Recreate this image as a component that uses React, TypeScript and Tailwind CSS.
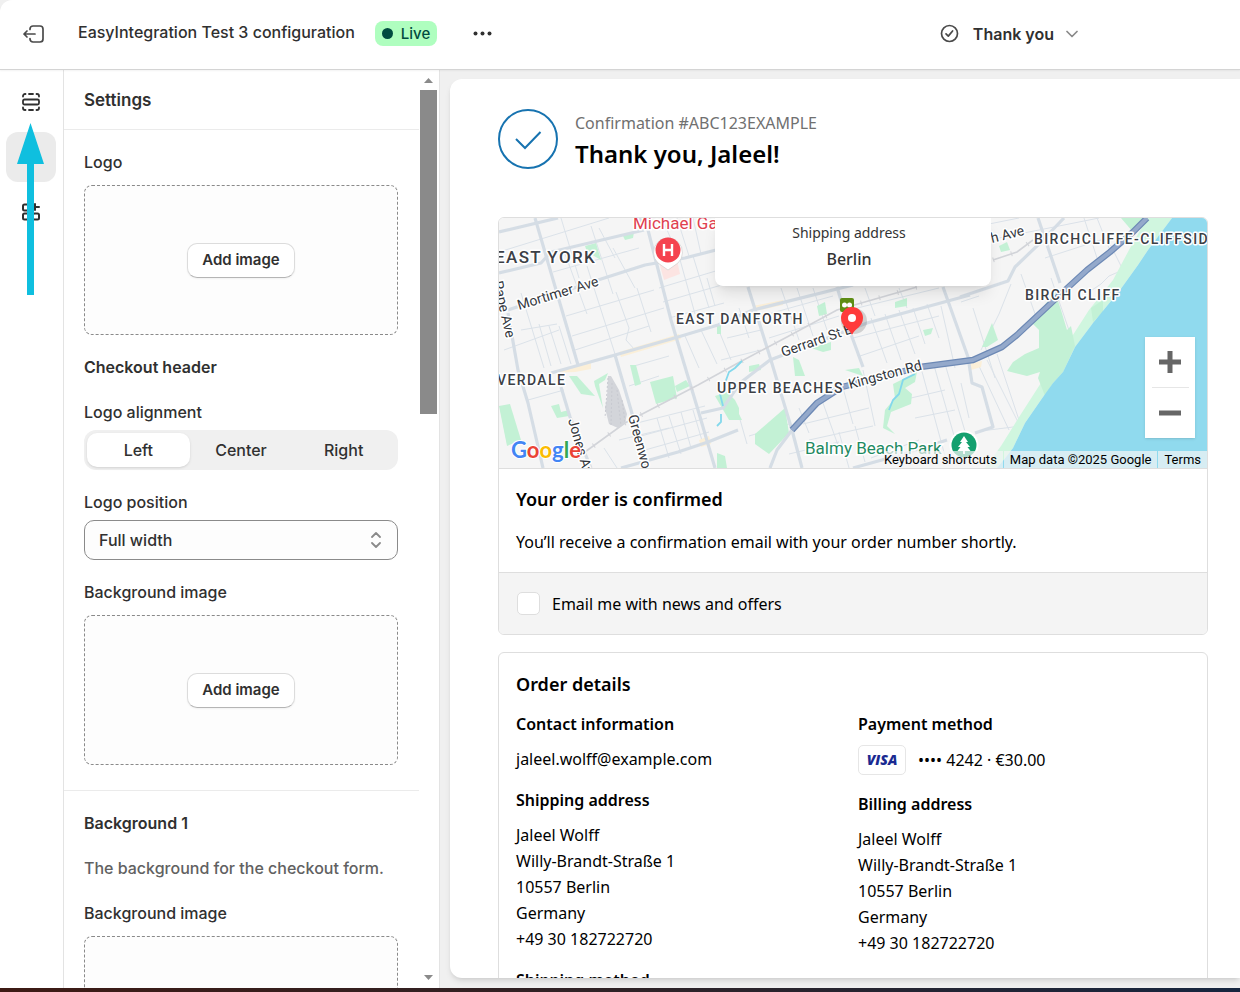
import { useState } from "react";

const INK = "#d5dde5";

// Main streets on the delivery map
const streets = [
  "M36 0 79 147",
  "M140 0 149 12 172 102 199 192 216 250",
  "M52 155 116 137 179 119 219 107 254 92 354 67",
  "M0 55 42 45 52 34 145 12",
  "M0 14 59 0",
  "M9 92 99 62 146 47 186 40 217 32",
  "M9 95 19 152 29 185 44 250",
  "M62 169 71 199 92 250",
  "M116 137 132 192 148 250",
  "M249 69 271 139 293 212 303 250",
  "M338 69 353 119 364 149",
  "M444 69 469 139 473 165 483 169 494 209 476 215",
  "M202 195 224 190 241 165 271 142 368 105 471 77",
  "M293 212 278 232 271 250",
  "M122 250 179 234 209 224 239 212",
  "M539 0 561 65",
  "M461 79 509 63 516 49 541 25 565 0",
  "M354 250 408 235 448 222",
];

const lanes = [
  "M0 34 110 0M54 54 140 30M67 98 155 72M73 118 165 90M76 132 150 108M5 132 60 112M22 112 58 106M29 182 65 172",
  "M62 0 80 60M92 8 114 76M22 75 45 150M40 106 52 148M50 108 62 146M60 108 72 146M64 30 88 96M88 48 116 136",
  "M117 74 130 110 127 122 136 132M138 70 152 114M114 30 136 70M100 10 116 40M163 0 180 40M178 0 190 38M194 0 202 36",
  "M160 70 220 52M164 84 240 62M170 100 225 85M180 38 196 96M194 38 210 90M208 60 216 88M186 118 200 150M202 112 218 146M218 108 232 142",
  "M135 148 170 138M130 168 160 158M138 205 206 188M142 218 208 200M146 232 210 214M158 200 170 240M170 198 182 236M182 194 192 230M194 192 204 226M105 230 118 250M120 222 170 210",
  "M240 90 250 120M228 120 262 112M262 98 334 78M270 120 340 98M282 70 300 122M298 70 314 118M314 70 328 112M350 92 440 70M354 120 440 98M361 138 420 118",
  "M372 100 388 145M386 96 402 142M400 92 416 136M414 90 426 126M428 86 440 120M442 88 456 150M400 70 408 90M366 70 376 98",
  "M422 150 446 238M434 144 458 228M446 146 468 220M412 180 446 172M416 200 456 192M344 170 354 206M364 152 376 208M324 185 340 230M304 206 370 190M310 222 374 208",
  "M340 214 350 250M356 208 366 244M300 190 310 215M372 240 420 222M290 236 340 224M250 218 290 206M236 184 248 226M222 142 262 132",
  "M462 84 480 78M474 90 496 160M488 142 520 206M498 136 522 208M480 148 510 212M462 165 470 200M482 213 522 208M482 132 500 96 512 66",
  "M522 56 548 130M546 40 608 20M572 118 580 118 588 108 606 98M552 60 572 118M585 0 598 40M598 0 610 30M608 20 624 52 610 58 602 66 590 74M470 10 520 0M500 20 600 0",
];

const parks = [
  "M86 28 97 25 102 42 88 34Z",
  "M124 18 135 14 134 20 126 22Z",
  "M70 158 78 158 96 178 82 176Z",
  "M95 163 109 155 106 162 100 166 104 190 96 168Z",
  "M131 147 137 147 142 166 136 168Z",
  "M151 164 174 158 178 180 157 186Z",
  "M176 168 187 162 191 168 178 174Z",
  "M0 188 11 186 22 222 8 228Z",
  "M52 188 60 186 62 194 70 192 70 198 58 200Z",
  "M216 178 228 174 236 182 240 190 240 202 230 202Z",
  "M218 235 226 238 228 250 218 250Z",
  "M256 216 286 190 290 215 270 236 256 226Z",
  "M227 185 237 190 243 202 234 202Z",
  "M294 139 300 142 306 158 296 158Z",
  "M250 148 260 146 262 152 250 154Z",
  "M318 88 326 84 328 96 320 98Z",
  "M396 84 408 80 408 88 396 90Z",
  "M424 112 434 110 432 116 426 118Z",
  "M312 130 332 124 332 132 324 134Z",
  "M346 152 360 150 364 158Z",
  "M394 166 418 154 416 164 406 170 413 176 412 186 402 190 392 194 388 208 396 216 384 210 386 192 396 180Z",
  "M500 28 508 24 511 32 502 34Z",
  "M483 129 493 105 499 122 488 129Z",
  "M556 74 562 92 568 112 572 108 576 128 564 154 554 165 546 178 539 160 541 154 528 158 508 153 514 144 526 136 540 130 540 112 532 104Z",
  "M592 90 604 82 604 94 594 104Z",
  "M622 0 648 0 634 14Z",
  "M218 106 222 106 222 116 218 116Z",
];

function DeliveryMap() {
  return (
    <svg
      viewBox="0 0 708 250"
      preserveAspectRatio="xMidYMid slice"
      className="block h-full w-full font-[Roboto,sans-serif]"
      role="img"
      aria-label="Map of the shipping address"
    >
      <rect width="708" height="250" fill="#f5f5f5" />
      <g fill="none" stroke="#dbe2e9" strokeWidth="1">
        {lanes.map((d) => (
          <path key={d} d={d} />
        ))}
      </g>
      <path d="M673 0 649 32 639 47 621 72 594 105 576 129 564 154 554 165 544 179 526 205 514 230 507 239 498 250 486 250 502 228 522 196 540 168 572 120 590 92 614 62 630 32 648 0Z" fill="#d0f6df" />
      <g fill="#c3f1d5">
        {parks.map((d) => (
          <path key={d} d={d} />
        ))}
      </g>
      <path d="M160 44 178 42 181 56 165 62Z" fill="#fce4e2" />
      <path d="M52 155 92 144 92 151 76 154ZM120 134 180 116 182 121 122 139ZM200 222 210 218 212 226 202 229ZM254 88 284 82 284 87 262 92ZM470 146 483 143 482 149 472 152Z" fill="#fbefd8" />
      <g fill="none" stroke={INK} strokeWidth="3.2" strokeLinejoin="round">
        {streets.map((d) => (
          <path key={d} d={d} />
        ))}
      </g>
      {/* Railway and its yard */}
      <path d="M79 239 126 205 199 167 239 145 288 119 338 92 418 69M494 42 518 34 534 22" fill="none" stroke="#d2d4d9" strokeWidth="1.6" />
      <path d="M79 239 126 205 199 167 239 145 288 119 338 92 418 69M494 42 518 34 534 22" fill="none" stroke="#d2d4d9" strokeWidth="5" strokeDasharray="1 18" />
      <path d="M109 158 112 158 120 172 128 196 126 205 119 210 110 206 106 190 108 180Z" fill="#d3d5da" />
      <path d="M109 160 106 200M113 165 112 208M118 172 122 208M123 182 126 204" stroke="#c8cad1" strokeDasharray="2 2" />
      {/* Creeks */}
      <path d="M243 143 236 150 230 154 226 165M221 176 224 188M222 196 222 204 218 208M416 156 404 162 400 176 394 182 390 192" fill="none" stroke="#83d8ec" strokeWidth="1.8" />
      <path d="M673 0 649 32 639 47 621 72 594 105 576 129 564 154 554 165 544 179 526 205 514 230 507 239 498 250 708 250 708 0Z" fill="#90daee" />
      <path d="M648 0 634 14 611 34 588 52 564 74 518 117 503 129 474 142 421 149 343 169 318 185 293 212" fill="none" stroke="#6d89b5" strokeWidth="6.4" strokeLinejoin="round" />
      <path d="M648 0 634 14 611 34 588 52 564 74 518 117 503 129 474 142 421 149 343 169 318 185 293 212" fill="none" stroke="#94a9cb" strokeWidth="4" strokeLinejoin="round" />

      <g fill="#3c4046" stroke="#fff" strokeWidth="3" strokeLinejoin="round" paintOrder="stroke" fontSize="14" fontWeight="500" className="tracking-widest">
        <text x="-4" y="45" fontSize="17">EAST YORK</text>
        <text x="177" y="106">EAST DANFORTH</text>
        <text x="-2" y="167">VERDALE</text>
        <text x="218" y="175">UPPER BEACHES</text>
        <text x="526" y="82">BIRCH CLIFF</text>
        <text x="535" y="26">BIRCHCLIFFE-CLIFFSIDE</text>
      </g>
      <g fill="#33373d" stroke="#fff" strokeWidth="3" strokeLinejoin="round" paintOrder="stroke" fontSize="14">
        <text transform="translate(20 92) rotate(-17)">Mortimer Ave</text>
        <text transform="translate(284 139) rotate(-19)">Gerrard St E</text>
        <text transform="translate(351 171) rotate(-15)">Kingston Rd</text>
        <text transform="translate(493 25) rotate(-14)">h Ave</text>
        <text transform="translate(-6 64) rotate(77)">Pape Ave</text>
        <text transform="translate(69 202) rotate(74)">Jones Ave</text>
        <text transform="translate(129 198) rotate(75)">Greenwood</text>
      </g>
      <text x="134" y="11" fill="#e0404f" stroke="#fff" strokeWidth="3" paintOrder="stroke" fontSize="17">Michael Garron</text>
      <text x="306" y="236" fill="#1f8a62" stroke="#fff" strokeWidth="3" paintOrder="stroke" fontSize="17">Balmy Beach Park</text>

      {/* Hospital */}
      <path d="M169 52 159 45A14.500 14.500 0 1 1 179 45Z" fill="#fff" stroke="#c9c9c9" strokeWidth="0.600" />
      <circle cx="169" cy="32" r="12.500" fill="#f5434f" />
      <path d="M165 26v12M173 26v12M165 32h8" stroke="#fff" strokeWidth="2.400" />
      {/* Park */}
      <circle cx="465" cy="227" r="14.500" fill="#fff" />
      <circle cx="465" cy="227" r="12.500" fill="#14a06f" />
      <path d="M465 218l4 6h-2l4 5h-2.500l3 4h-5.500v3h-2v-3h-5.500l3-4h-2.500l4-5h-2z" fill="#fff" />
      {/* Station */}
      <rect x="341" y="80" width="14" height="14" rx="2" fill="#5f8f14" />
      <circle cx="345.500" cy="87" r="2.500" fill="#fff" />
      <circle cx="350.500" cy="87" r="2.500" fill="#fff" />
      {/* Marker */}
      <ellipse cx="355" cy="103" rx="13" ry="13" fill="#000" opacity="0.150" />
      <path d="M353 117c-2-6-11-8-11-17a11 11 0 0 1 22 0c0 9-9 11-11 17z" fill="#ff3b3b" />
      <circle cx="353" cy="100" r="4" fill="#fff" />

      <text x="12" y="240" fontSize="22" fontWeight="700" stroke="#fff" strokeWidth="2" paintOrder="stroke" className="font-[Lato,sans-serif]">
        <tspan fill="#4285f4">G</tspan>
        <tspan fill="#ea4335">o</tspan>
        <tspan fill="#fbbc04">o</tspan>
        <tspan fill="#4285f4">g</tspan>
        <tspan fill="#34a853">l</tspan>
        <tspan fill="#ea4335">e</tspan>
      </text>
    </svg>
  );
}

function ImagePicker({ id }: { id: string }) {
  return (
    <div className="flex h-[150px] items-center justify-center rounded-lg border border-dashed border-[#8a8a8a] bg-[#fdfdfd]">
      <button
        id={id}
        className="h-[35px] rounded-[10px] border border-[#dcdcdc] border-b-[#b5b5b5] bg-white px-[14px] text-[15px] font-semibold shadow-xs"
      >
        Add image
      </button>
    </div>
  );
}

function Header() {
  return (
    <header className="relative z-10 flex h-[70px] shrink-0 items-center rounded-tl-xl border-b border-[#d4d4d4] bg-white pb-0.5 shadow-xs">
      <div className="flex min-w-0 flex-1 items-center pl-[22px]">
        <button aria-label="Exit editor" className="w-[56px]">
          <svg width="23" height="20" viewBox="0 0 23 20" fill="none" stroke="#4a4a4a" strokeWidth="1.700" strokeLinecap="round" strokeLinejoin="round">
            <path d="M8 5.500V5a3 3 0 0 1 3-3h7a3 3 0 0 1 3 3v10a3 3 0 0 1-3 3h-7a3 3 0 0 1-3-3v-.500M13 10H2M5 7l-3 3 3 3" />
          </svg>
        </button>
        <h1 className="pb-1">EasyIntegration Test 3 configuration</h1>
        <span className="ml-5 flex h-[25px] items-center gap-2 rounded-lg bg-[#affebf] px-[7px] text-[15px] text-[#014b40]">
          <span className="size-[11px] rounded-full bg-[#014b40]" />
          Live
        </span>
        <button aria-label="More actions" className="ml-9">
          <svg width="19" height="5" viewBox="0 0 19 5" fill="#303030">
            <circle cx="2.500" cy="2.500" r="2" />
            <circle cx="9.500" cy="2.500" r="2" />
            <circle cx="16.500" cy="2.500" r="2" />
          </svg>
        </button>
      </div>
      <button className="mr-[162px] flex items-center gap-[14px] text-base font-semibold">
        <svg width="19" height="19" viewBox="0 0 19 19" fill="none" stroke="#4a4a4a" strokeWidth="1.700" strokeLinecap="round" strokeLinejoin="round">
          <circle cx="9.500" cy="9.500" r="8" />
          <path d="M6 9.800l2.300 2.300L12.600 7" />
        </svg>
        Thank you
        <svg width="12" height="8" viewBox="0 0 12 8" fill="none" stroke="#8a8a8a" strokeWidth="1.700" strokeLinecap="round" strokeLinejoin="round" className="-ml-0.5">
          <path d="M1 1.500l5 5 5-5" />
        </svg>
      </button>
    </header>
  );
}

function Rail() {
  return (
    <nav className="relative flex w-16 shrink-0 flex-col items-center gap-[5px] border-r border-[#e3e3e3] bg-white pt-[7px] pr-0.5">
      <button aria-label="Sections" className="flex size-[50px] items-center justify-center rounded-xl">
        <svg width="18" height="18" viewBox="0 0 18 18" fill="none" stroke="#303030" strokeWidth="1.800" strokeLinecap="round">
          <rect x="1" y="6.500" width="16" height="5" rx="1.500" />
          <path d="M1 3.500V3a2 2 0 0 1 2-2h.500M7 1h4M14.500 1h.500a2 2 0 0 1 2 2v.500M1 14.500v.500a2 2 0 0 0 2 2h.500M7 17h4M14.500 17h.500a2 2 0 0 0 2-2v-.500" />
        </svg>
      </button>
      <button aria-label="Settings" aria-current="page" className="size-[50px] rounded-xl bg-[#ebebeb]" />
      <button aria-label="Apps" className="flex size-[50px] items-center justify-center rounded-xl">
        <svg width="18" height="18" viewBox="0 0 18 18" fill="none" stroke="#303030" strokeWidth="2" strokeLinecap="round" strokeLinejoin="round">
          <rect x="1" y="1.500" width="6" height="6" rx="1.500" />
          <rect x="1" y="10.500" width="6" height="6" rx="1.500" />
          <rect x="11" y="10.500" width="6" height="6" rx="1.500" />
          <path d="M13 1v6M10 4h7" />
        </svg>
      </button>
      {/* Pointer to the sections tab */}
      <svg width="28" height="172" viewBox="0 0 28 172" fill="#0fbfdf" className="pointer-events-none absolute top-[53px] left-4">
        <path d="M14.500 0 28 41h-10v131h-7V41H1z" />
      </svg>
    </nav>
  );
}

const alignments = ["Left", "Center", "Right"];

function SettingsPanel() {
  const [alignment, setAlignment] = useState("Left");

  return (
    <aside className="flex w-[376px] shrink-0 border-r border-[#e3e3e3] bg-white">
      <div className="min-w-0 flex-1 overflow-hidden">
        <h2 className="flex h-[60px] items-center border-b border-[#ebebeb] px-5 text-[17px] font-semibold">Settings</h2>

        <section className="flex flex-col gap-5 border-b border-[#ebebeb] pt-5 pr-[21px] pb-[25px] pl-5">
          <div className="flex flex-col gap-[11px]">
            <label htmlFor="logo">Logo</label>
            <ImagePicker id="logo" />
          </div>
          <h3 className="font-semibold">Checkout header</h3>
          <fieldset>
            <legend className="mb-[5px] leading-[26px]">Logo alignment</legend>
            <div className="grid h-10 grid-cols-3 rounded-xl bg-[#f0f0f0] p-[3px]">
              {alignments.map((name) => (
                <label
                  key={name}
                  className="flex items-center justify-center rounded-[10px] has-checked:bg-white has-checked:shadow-sm"
                >
                  <input
                    type="radio"
                    name="alignment"
                    checked={alignment === name}
                    onChange={() => setAlignment(name)}
                    className="sr-only"
                  />
                  {name}
                </label>
              ))}
            </div>
          </fieldset>
          <div className="flex flex-col gap-1.5">
            <label htmlFor="position">Logo position</label>
            <div className="relative">
              <select id="position" className="block h-10 w-full appearance-none rounded-[10px] border border-[#8a8a8a] bg-[#fdfdfd] px-[14px]">
                <option>Full width</option>
                <option>Inline</option>
              </select>
              <svg width="12" height="16" viewBox="0 0 12 16" fill="none" stroke="#8a8a8a" strokeWidth="1.800" strokeLinecap="round" strokeLinejoin="round" className="pointer-events-none absolute top-3 right-4">
                <path d="M2 5l4-4 4 4M2 11l4 4 4-4" />
              </svg>
            </div>
          </div>
          <div className="flex flex-col gap-[11px]">
            <label htmlFor="header-bg">Background image</label>
            <ImagePicker id="header-bg" />
          </div>
        </section>

        <section className="flex flex-col gap-[21px] pt-5 pr-[21px] pl-5">
          <h3 className="font-semibold">Background 1</h3>
          <p className="font-medium whitespace-nowrap text-[#616161]">The background for the checkout form.</p>
          <div className="flex flex-col gap-[11px]">
            <label htmlFor="form-bg">Background image</label>
            <ImagePicker id="form-bg" />
          </div>
        </section>
      </div>

      {/* Scrollbar */}
      <div className="flex w-5 shrink-0 flex-col items-center justify-between pt-2 pr-px pb-2">
        <div className="flex flex-col items-center gap-[7px]">
          <svg width="9" height="5" viewBox="0 0 9 5" fill="#8a8a8a"><path d="M0 5 4.500 0 9 5z" /></svg>
          <div className="h-[324px] w-[17px] bg-[#8a8a8a]" />
        </div>
        <svg width="9" height="5" viewBox="0 0 9 5" fill="#8a8a8a"><path d="M0 0h9L4.500 5z" /></svg>
      </div>
    </aside>
  );
}

const address = ["Jaleel Wolff", "Willy-Brandt-Straße 1", "10557 Berlin", "Germany", "+49 30 182722720"];

function AddressBlock({ title }: { title: string }) {
  return (
    <div>
      <h3 className="font-semibold">{title}</h3>
      <address className="mt-[9px] not-italic">
        {address.map((line) => (
          <p key={line}>{line}</p>
        ))}
      </address>
    </div>
  );
}

function Preview() {
  return (
    <div className="min-h-0 min-w-0 flex-1 bg-[#f0f0f0] pt-[9px] pb-2.5 pl-2.5">
      <main className="h-full overflow-hidden rounded-l-xl bg-white pt-[30px] pr-8 pl-12 font-['Noto_Sans',sans-serif] text-base leading-[26px] font-normal text-black shadow-md">
        <div className="flex h-[60px] items-center gap-[17px]">
          <svg width="60" height="60" viewBox="0 0 60 60" fill="none" stroke="#1773b0" strokeWidth="2" className="shrink-0">
            <circle cx="30" cy="30" r="29" />
            <path d="M18 30l9 9 15.500-16" />
          </svg>
          <div className="pt-1">
            <p className="text-[#707070]">Confirmation #ABC123EXAMPLE</p>
            <h2 className="text-2xl leading-9 font-semibold">Thank you, Jaleel!</h2>
          </div>
        </div>

        <section className="mt-12 overflow-hidden rounded-md border border-[#dedede]">
          <div className="relative h-[250px]">
            <DeliveryMap />
            <div className="absolute top-0 left-[216px] flex h-[68px] w-[276px] flex-col items-center rounded-b-lg bg-white pt-0.5 pr-2 text-[#333] shadow-lg">
              <span className="text-sm leading-[26px]">Shipping address</span>
              <span className="leading-[26px] font-medium">Berlin</span>
            </div>
            <div className="absolute right-3 bottom-[30px] flex w-[50px] flex-col items-center bg-white shadow">
              <button aria-label="Zoom in" className="flex size-[50px] items-center justify-center">
                <svg width="22" height="22" viewBox="0 0 22 22" stroke="#666" strokeWidth="5"><path d="M11 0v22M0 11h22" /></svg>
              </button>
              <span className="h-px w-[37px] bg-[#e6e6e6]" />
              <button aria-label="Zoom out" className="flex size-[50px] items-center justify-center">
                <svg width="22" height="6" viewBox="0 0 22 6" stroke="#666" strokeWidth="5"><path d="M0 3h22" /></svg>
              </button>
            </div>
            <div className="absolute right-0 bottom-0 flex gap-px font-[Roboto,sans-serif] text-[13px] leading-[17px]">
              <button className="bg-[#f5f5f5]/70 pr-1.5">Keyboard shortcuts</button>
              <span className="bg-[#f5f5f5]/70 px-1.5">Map data ©2025 Google</span>
              <a href="#terms" className="bg-[#f5f5f5]/70 px-1.5">Terms</a>
            </div>
          </div>
          <div className="border-t border-[#dedede] p-[17px]">
            <h3 className="text-lg leading-[26px] font-semibold">Your order is confirmed</h3>
            <p className="mt-[17px]">You’ll receive a confirmation email with your order number shortly.</p>
          </div>
          <label className="flex h-[62px] items-center gap-3 border-t border-[#dedede] bg-[#f4f4f4] px-[18px]">
            <input type="checkbox" className="size-[23px] appearance-none rounded-[5px] border border-[#dedede] bg-white" />
            Email me with news and offers
          </label>
        </section>

        <section className="mt-[17px] rounded-md border border-[#dedede] px-[17px] pt-[18px] pb-5">
          <h3 className="text-lg leading-[26px] font-semibold">Order details</h3>
          <div className="mt-[14px] grid grid-cols-2 gap-x-2.5">
            <div className="flex flex-col gap-[15px]">
              <div>
                <h3 className="font-semibold">Contact information</h3>
                <p className="mt-[9px]">jaleel.wolff@example.com</p>
              </div>
              <AddressBlock title="Shipping address" />
              <h3 className="font-semibold">Shipping method</h3>
            </div>
            <div className="flex flex-col gap-4">
              <div>
                <h3 className="font-semibold">Payment method</h3>
                <div className="mt-2 flex h-[30px] items-center gap-3">
                  <span className="flex h-[30px] w-12 items-center justify-center rounded-[5px] border border-[#e6e6e6] font-['Open_Sans',sans-serif] text-sm font-extrabold text-[#1a2a91] italic">
                    VISA
                  </span>
                  <span>•••• 4242 · €30.00</span>
                </div>
              </div>
              <AddressBlock title="Billing address" />
            </div>
          </div>
        </section>
      </main>
    </div>
  );
}

export default function App() {
  return (
    <div className="flex h-screen flex-col overflow-hidden bg-[#f0f0f0] font-[Inter,sans-serif] text-base leading-6 font-[450] text-[#303030]">
      <Header />
      <div className="flex min-h-0 flex-1">
        <Rail />
        <SettingsPanel />
        <Preview />
      </div>
      <div className="h-1 shrink-0 bg-linear-to-r from-[#3d1a14] via-[#2e2226] to-[#16253f]" />
    </div>
  );
}
